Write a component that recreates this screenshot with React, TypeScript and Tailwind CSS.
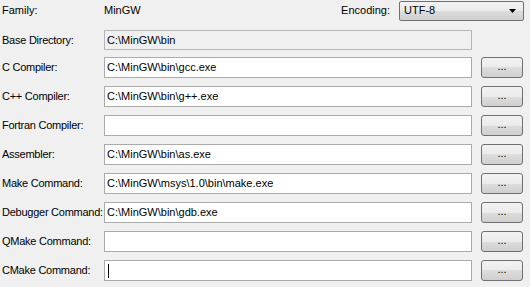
import React from "react";

const font = { fontFamily: '"Liberation Sans", Arial, sans-serif' };

function Dots() {
  return (
    <button className="w-[42px] h-[21px] shrink-0 rounded-[3px] border border-[#707070] bg-[linear-gradient(#f2f2f2_0%,#ebebeb_50%,#dddddd_50%,#cfcfcf_100%)] flex items-center justify-center text-[11px] leading-none text-black pb-[2px]">
      ...
    </button>
  );
}

function Row({ label, value, cursor }: { label: string; value: string; cursor?: boolean }) {
  return (
    <div className="flex items-center h-[21px]">
      <div className="w-[104px] shrink-0 pl-[2px] text-[11px] tracking-[-0.25px] text-black whitespace-nowrap">{label}</div>
      <div className="w-[368px] shrink-0 h-[21px] border border-[#ababab] bg-white flex items-center pl-[2px] text-[11px] text-black whitespace-nowrap">
        {value}
        {cursor && <span className="w-px h-[14px] bg-black ml-[1px]" />}
      </div>
      <div className="ml-[9px]">
        <Dots />
      </div>
    </div>
  );
}

export default function App() {
  const rows: [string, string, boolean?][] = [
    ["C Compiler:", "C:\\MinGW\\bin\\gcc.exe"],
    ["C++ Compiler:", "C:\\MinGW\\bin\\g++.exe"],
    ["Fortran Compiler:", ""],
    ["Assembler:", "C:\\MinGW\\bin\\as.exe"],
    ["Make Command:", "C:\\MinGW\\msys\\1.0\\bin\\make.exe"],
    ["Debugger Command:", "C:\\MinGW\\bin\\gdb.exe"],
    ["QMake Command:", ""],
    ["CMake Command:", "", true],
  ];
  return (
    <div className="w-[530px] h-[287px] bg-[#f0f0f0] overflow-hidden" style={font}>
      <div className="flex items-center h-[21px]">
        <div className="w-[104px] shrink-0 pl-[2px] text-[11px] text-black">Family:</div>
        <div className="text-[11px] text-black">MinGW</div>
        <div className="ml-auto text-[11px] text-black mr-[9px]">Encoding:</div>
        <div className="w-[125px] h-[20px] mr-[6px] rounded-[2px] border border-[#707070] bg-[linear-gradient(#f2f2f2_0%,#ebebeb_50%,#dddddd_50%,#cfcfcf_100%)] flex items-center pl-[4px] pr-[7px] text-[11px] text-black">
          <span>UTF-8</span>
          <svg className="ml-auto" width="7" height="4" viewBox="0 0 7 4">
            <path d="M0 0h7L3.5 4z" fill="#000" />
          </svg>
        </div>
      </div>
      <div className="flex items-center h-[20px] mt-[9px]">
        <div className="w-[104px] shrink-0 pl-[2px] text-[11px] tracking-[-0.25px] text-black">Base Directory:</div>
        <div className="w-[368px] h-[20px] border border-[#b5b5b5] bg-[#f0f0f0] flex items-center pl-[2px] text-[11px] text-black">
          C:\MinGW\bin
        </div>
      </div>
      <div className="flex flex-col gap-[8px] mt-[7px]">
        {rows.map(([l, v, c]) => (
          <Row key={l} label={l} value={v} cursor={c} />
        ))}
      </div>
    </div>
  );
}
